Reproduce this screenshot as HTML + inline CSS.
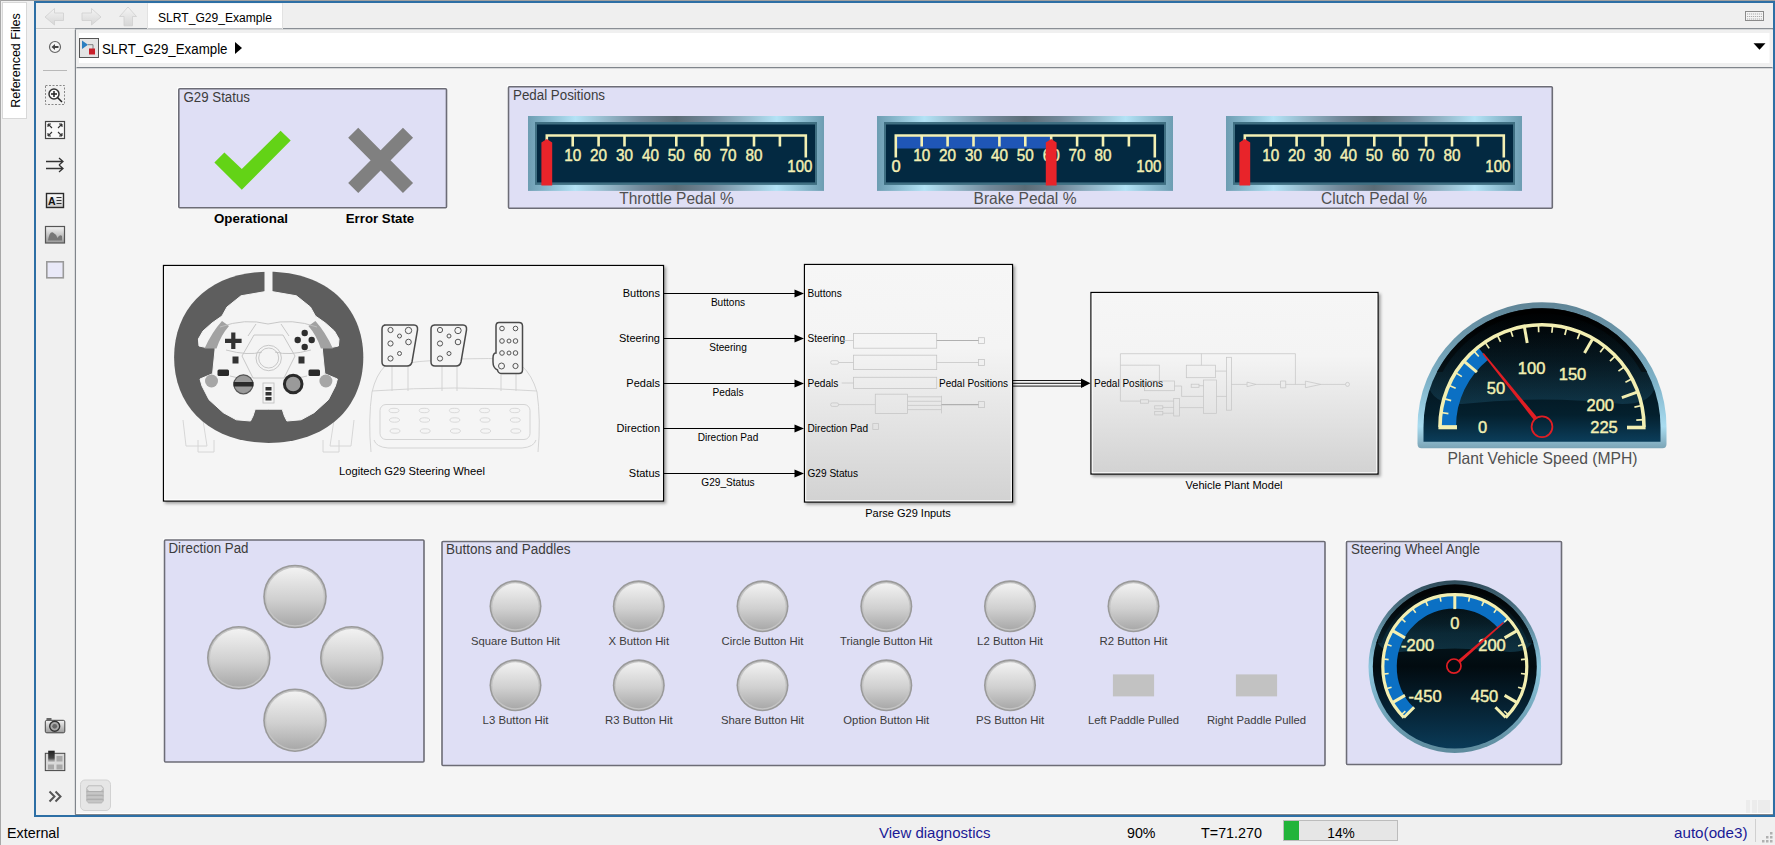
<!DOCTYPE html>
<html><head><meta charset="utf-8"><style>
html,body{margin:0;padding:0;width:1775px;height:845px;overflow:hidden;background:#f0f0f0;font-family:"Liberation Sans", sans-serif;}
svg{display:block;}
</style></head><body>
<svg width="1775" height="845" viewBox="0 0 1775 845" font-family='"Liberation Sans", sans-serif'>

<defs>
  <linearGradient id="frameH" x1="0" y1="0" x2="1" y2="0">
    <stop offset="0" stop-color="#6d9db2"/>
    <stop offset="0.16" stop-color="#b3e3f6"/>
    <stop offset="0.38" stop-color="#72899a"/>
    <stop offset="0.5" stop-color="#5b6c76"/>
    <stop offset="0.62" stop-color="#72899a"/>
    <stop offset="0.84" stop-color="#b3e3f6"/>
    <stop offset="1" stop-color="#6d9db2"/>
  </linearGradient>
  <linearGradient id="subsys" x1="0" y1="0" x2="0" y2="1">
    <stop offset="0" stop-color="#f6f6f6"/>
    <stop offset="0.35" stop-color="#f4f4f4"/>
    <stop offset="1" stop-color="#d2d2d2"/>
  </linearGradient>
  <linearGradient id="btn" x1="0" y1="0" x2="0" y2="1">
    <stop offset="0" stop-color="#f2f2f2"/>
    <stop offset="0.55" stop-color="#d0d0d0"/>
    <stop offset="1" stop-color="#a9a9a9"/>
  </linearGradient>
  <radialGradient id="dialbg" cx="0.5" cy="0.5" r="0.5">
    <stop offset="0" stop-color="#06202e"/>
    <stop offset="1" stop-color="#020c12"/>
  </radialGradient>
  <linearGradient id="dialrim" x1="0" y1="0" x2="0" y2="1">
    <stop offset="0" stop-color="#4d6f80"/>
    <stop offset="0.5" stop-color="#8fc3da"/>
    <stop offset="1" stop-color="#6a95a8"/>
  </linearGradient>
  <linearGradient id="speedbg" x1="0" y1="0" x2="0" y2="1">
    <stop offset="0" stop-color="#000000"/>
    <stop offset="0.5" stop-color="#03131b"/>
    <stop offset="0.8" stop-color="#04202e"/>
    <stop offset="1" stop-color="#0b3d5a"/>
  </linearGradient>
  <filter id="shadow" x="-5%" y="-5%" width="115%" height="115%">
    <feDropShadow dx="2" dy="2" stdDeviation="1.5" flood-color="#000" flood-opacity="0.35"/>
  </filter>
  <linearGradient id="rimS" x1="0" y1="0" x2="0" y2="1">
    <stop offset="0" stop-color="#5f8496"/>
    <stop offset="0.55" stop-color="#7fb3c9"/>
    <stop offset="0.85" stop-color="#a9dcf0"/>
    <stop offset="1" stop-color="#7ba4b6"/>
  </linearGradient>
  <linearGradient id="rimC" x1="0" y1="0" x2="0" y2="1">
    <stop offset="0" stop-color="#2e4a58"/>
    <stop offset="0.5" stop-color="#8cc6de"/>
    <stop offset="1" stop-color="#5d8a9c"/>
  </linearGradient>
  <linearGradient id="steerbg" x1="0" y1="0" x2="0" y2="1">
    <stop offset="0" stop-color="#000000"/>
    <stop offset="0.3" stop-color="#04161e"/>
    <stop offset="0.5" stop-color="#020b10"/>
    <stop offset="1" stop-color="#0a3a57"/>
  </linearGradient>
  <linearGradient id="gloss" x1="0" y1="0" x2="0" y2="1">
    <stop offset="0" stop-color="#5ab4dc" stop-opacity="0"/>
    <stop offset="0.6" stop-color="#5ab4dc" stop-opacity="0.04"/>
    <stop offset="1" stop-color="#5ab4dc" stop-opacity="0.16"/>
  </linearGradient>
  <linearGradient id="glossS" gradientUnits="userSpaceOnUse" x1="0" y1="320" x2="0" y2="404">
    <stop offset="0" stop-color="#4ab0e0" stop-opacity="0"/>
    <stop offset="0.5" stop-color="#4ab0e0" stop-opacity="0.06"/>
    <stop offset="1" stop-color="#4ab0e0" stop-opacity="0.16"/>
  </linearGradient>
  <linearGradient id="glossC" gradientUnits="userSpaceOnUse" x1="0" y1="595" x2="0" y2="652">
    <stop offset="0" stop-color="#3aa8d8" stop-opacity="0.02"/>
    <stop offset="0.5" stop-color="#3aa8d8" stop-opacity="0.08"/>
    <stop offset="1" stop-color="#3aa8d8" stop-opacity="0.22"/>
  </linearGradient>
  <linearGradient id="iconG" x1="0" y1="0" x2="0" y2="1">
    <stop offset="0" stop-color="#ffffff"/><stop offset="1" stop-color="#c8c8c8"/>
  </linearGradient>
  <linearGradient id="iconG2" x1="0" y1="0" x2="0" y2="1">
    <stop offset="0" stop-color="#f4f4f4"/><stop offset="1" stop-color="#9a9a9a"/>
  </linearGradient>
  <linearGradient id="pixG" x1="0" y1="0" x2="0" y2="1">
    <stop offset="0" stop-color="#222"/><stop offset="0.6" stop-color="#444"/><stop offset="1" stop-color="#eee"/>
  </linearGradient>
  <linearGradient id="arrG" x1="0" y1="0" x2="0" y2="1">
    <stop offset="0" stop-color="#f4f4f4"/><stop offset="1" stop-color="#d6d6d6"/>
  </linearGradient>
</defs>
<rect x="0" y="0" width="1775" height="845" fill="#f0f0f0"/><rect x="0" y="0" width="1775" height="1" fill="#a0a0a0"/><rect x="0" y="0" width="1" height="845" fill="#a8a8a8"/><rect x="2.5" y="2.5" width="24" height="116" fill="#ffffff" stroke="#d8d8d8" stroke-width="1"/><text transform="translate(20.3,107.8) rotate(-90)" font-family='"Liberation Sans", sans-serif' font-size="13.5" fill="#000" textLength="94.5" lengthAdjust="spacingAndGlyphs">Referenced Files</text><rect x="34" y="1" width="1741" height="816" fill="#2d6fa5"/><rect x="36" y="3" width="1737" height="812" fill="#f0f0f0"/><rect x="36" y="3" width="1737" height="26" fill="#efefef"/><rect x="36" y="28" width="39" height="1" fill="#c8c8c8"/><rect x="36" y="29" width="39" height="1" fill="#f8f8f8"/><rect x="75" y="28" width="1698" height="1.5" fill="#8a8f95"/><rect x="147.5" y="3.5" width="135" height="25" fill="#ffffff"/><rect x="147" y="3" width="1" height="26" fill="#e2e2e2"/><rect x="282" y="3" width="1" height="26" fill="#e2e2e2"/><text x="158" y="22" font-family='"Liberation Sans", sans-serif' font-size="12.5" fill="#000" textLength="114" lengthAdjust="spacingAndGlyphs">SLRT_G29_Example</text><path d="M45,17 L54.5,8.5 L54.5,13 L63.5,13 L63.5,20.5 L54.5,20.5 L54.5,25 Z" fill="url(#arrG)" stroke="#cfcfcf" stroke-width="0.8"/><path d="M101,17 L91.5,8.5 L91.5,13 L82,13 L82,20.5 L91.5,20.5 L91.5,25 Z" fill="url(#arrG)" stroke="#cfcfcf" stroke-width="0.8"/><path d="M128,7 L136.5,16.5 L132.5,16.5 L132.5,25.8 L124,25.8 L124,16.5 L119.5,16.5 Z" fill="url(#arrG)" stroke="#cfcfcf" stroke-width="0.8"/><rect x="1745.5" y="11.5" width="18" height="9" fill="#f4f4f4" stroke="#8a8a8a" stroke-width="1"/><path d="M1747,14h15M1747,16.5h15M1747,19h15" stroke="#9a9a9a" stroke-width="0.8" stroke-dasharray="1.2,0.8"/><rect x="36" y="29.5" width="39.5" height="785" fill="#f0f0f0"/><rect x="74.8" y="29.5" width="1.2" height="785" fill="#80858b"/><rect x="76.5" y="29.5" width="1696" height="37" fill="#f0f0f0"/><rect x="79" y="33" width="1690.5" height="30" fill="#ffffff"/><rect x="76.5" y="67" width="1696" height="1.5" fill="#80858b"/><rect x="79.5" y="38.5" width="19" height="19" fill="#e4e4e4" stroke="#555" stroke-width="1"/><path d="M82,40.5 L82,49 L88,44.7 Z" fill="#2b7fc0"/><path d="M88,44.7 L93,44.7 L93,50" stroke="#666" fill="none" stroke-width="0.8"/><rect x="89" y="48.5" width="6" height="6" fill="#c8202a"/><text x="102" y="53.5" font-family='"Liberation Sans", sans-serif' font-size="14" fill="#000" textLength="125.5" lengthAdjust="spacingAndGlyphs">SLRT_G29_Example</text><path d="M235,42 L242,48 L235,54 Z" fill="#000"/><path d="M1753.5,43.2 L1765.5,43.2 L1759.5,49.8 Z" fill="#000"/><rect x="76.5" y="68.5" width="1695.5" height="745" fill="#f5f5f5"/><rect x="76.5" y="813" width="1695.5" height="1" fill="#ffffff"/><rect x="75" y="814" width="1698" height="1" fill="#80858b"/><rect x="1746" y="800" width="4" height="13" fill="#ececec"/><rect x="1752" y="800" width="5" height="13" fill="#ececec"/><rect x="1758" y="800" width="12" height="13" fill="#ececec"/><text x="7" y="838" font-family='"Liberation Sans", sans-serif' font-size="15" fill="#000" textLength="52.5" lengthAdjust="spacingAndGlyphs">External</text><text x="879" y="838" font-family='"Liberation Sans", sans-serif' font-size="15" fill="#1a1a96" textLength="111.5" lengthAdjust="spacingAndGlyphs">View diagnostics</text><text x="1127" y="838" font-family='"Liberation Sans", sans-serif' font-size="15" fill="#000" textLength="28.5" lengthAdjust="spacingAndGlyphs">90%</text><text x="1201" y="838" font-family='"Liberation Sans", sans-serif' font-size="15" fill="#000" textLength="61" lengthAdjust="spacingAndGlyphs">T=71.270</text><rect x="1283.5" y="820.5" width="114" height="20" fill="#e6e6e6" stroke="#bcbcbc" stroke-width="1"/><rect x="1284" y="821" width="15" height="19" fill="#22b43a"/><text x="1341" y="838" text-anchor="middle" font-family='"Liberation Sans", sans-serif' font-size="15" fill="#000" textLength="27.5" lengthAdjust="spacingAndGlyphs">14%</text><text x="1674" y="838" font-family='"Liberation Sans", sans-serif' font-size="15" fill="#1a1a96" textLength="73.5" lengthAdjust="spacingAndGlyphs">auto(ode3)</text><rect x="1755" y="819" width="1" height="23" fill="#d0d0d0"/><rect x="1770" y="832" width="2.5" height="2.5" fill="#b0b0b0"/><rect x="1766" y="836" width="2.5" height="2.5" fill="#b0b0b0"/><rect x="1770" y="836" width="2.5" height="2.5" fill="#b0b0b0"/><rect x="1762" y="840" width="2.5" height="2.5" fill="#b0b0b0"/><rect x="1766" y="840" width="2.5" height="2.5" fill="#b0b0b0"/><rect x="1770" y="840" width="2.5" height="2.5" fill="#b0b0b0"/><circle cx="55" cy="47" r="5.5" fill="#f4f4f4" stroke="#666" stroke-width="1.2"/><path d="M51.5,47 L55,44 L55,46 L58.5,46 L58.5,48 L55,48 L55,50 Z" fill="#444"/><rect x="43" y="70" width="24" height="1" fill="#b8b8b8"/><rect x="45.5" y="85.5" width="19" height="19" fill="none" stroke="#888" stroke-width="1" stroke-dasharray="2,1.5"/><circle cx="54" cy="94" r="5" fill="#fafafa" stroke="#333" stroke-width="1.5"/><path d="M54,91v6M51,94h6M57.5,97.5L62,102" stroke="#222" stroke-width="1.5"/><rect x="45.5" y="121.5" width="19" height="17" fill="#f8f8f8" stroke="#444" stroke-width="1.2"/><path d="M48,124l4,4M48,124h3M48,124v3M62,124l-4,4M62,124h-3M62,124v3M48,136l4,-4M48,136h3M48,136v-3M62,136l-4,-4M62,136h-3M62,136v-3" stroke="#333" stroke-width="1.1"/><path d="M46,161.5h17M59,158l4,3.5l-4,3.5M46,168.5h17M59,165l4,3.5l-4,3.5" stroke="#333" stroke-width="1.3" fill="none"/><rect x="46.5" y="193.5" width="17" height="14" fill="url(#iconG)" stroke="#2a2a2a" stroke-width="1.4"/><text x="48" y="205" font-family='"Liberation Sans", sans-serif' font-size="10.5" font-weight="bold" fill="#111">A</text><path d="M56.5,197.5h5M56.5,200.5h5M56.5,203.5h5" stroke="#333" stroke-width="1.1"/><rect x="45.5" y="226.5" width="19" height="16.5" fill="url(#iconG2)" stroke="#555" stroke-width="1.2"/><path d="M48,240.5 Q49.5,231 53,232.5 Q56,234 57.5,238 Q59.5,234 62,236 L62,240.5 Z" fill="#777"/><rect x="46.8" y="261.8" width="16.5" height="16" fill="#e9e9f8" stroke="#9a9a9a" stroke-width="1.6"/><rect x="45.3" y="720.3" width="19.5" height="12.5" rx="1.5" fill="url(#iconG2)" stroke="#444" stroke-width="1"/><rect x="46.5" y="718" width="5" height="2.5" fill="#666"/><circle cx="54.7" cy="726.3" r="5" fill="#aaa" stroke="#333" stroke-width="1.4"/><circle cx="54.7" cy="726.3" r="2.4" fill="#666"/><rect x="45.3" y="753.3" width="19.5" height="17.3" fill="#d8d8d8" stroke="#444" stroke-width="1"/><rect x="48.2" y="750.7" width="6.5" height="12.3" fill="url(#pixG)"/><rect x="56.5" y="756" width="6" height="5.5" fill="#a8a8a8"/><rect x="48" y="764.5" width="6" height="5" fill="#a8a8a8"/><rect x="56.5" y="764.5" width="6" height="5" fill="#a8a8a8"/><path d="M49.5,791.5l5,5l-5,5M55.5,791.5l5,5l-5,5" stroke="#555" stroke-width="2" fill="none"/><rect x="80.5" y="780" width="30" height="30.5" rx="4.5" fill="#e6e6e6" stroke="#d2d2d2" stroke-width="1"/><path d="M88.5,785.3 H101.5 L103.8,788 V801 L101.5,803.6 H88.5 L86.2,801 V788 Z" fill="#bcbcbc"/><path d="M89,786.3 H101 L103,788.5 L101,791 H89 L87,788.5 Z" fill="#e2e2e2"/><path d="M86.5,791.8 H103.5 M86.5,795.8 H103.5 M86.5,799.8 H103.5" stroke="#a9a9a9" stroke-width="0.9"/><path d="M87.5,793 H102.5 M87.5,797 H102.5 M87.5,801 H102.5" stroke="#cfcfcf" stroke-width="1.2"/><rect x="177.8" y="87.7" width="268.7" height="120.10000000000001" fill="none" stroke="#ffffff" stroke-width="1"/><rect x="178.8" y="88.7" width="267.7" height="119.10000000000001" rx="1" fill="#dfdff5" stroke="#6c6c76" stroke-width="1.6"/><text x="183.5" y="102.2" font-size="14" fill="#3c3c3c" textLength="66.5" lengthAdjust="spacingAndGlyphs">G29 Status</text><path d="M214.4,162.4 L224.4,152.5 L241.8,169 L280.6,130.8 L290.7,140.6 L241.8,189.8 Z" fill="#63d316"/><path d="M353.2,132.8 L408,188 M408,132.8 L353.2,188" stroke="#808080" stroke-width="14.2"/><text x="251" y="223" font-size="13" fill="#000" text-anchor="middle" font-weight="bold" textLength="74" lengthAdjust="spacingAndGlyphs">Operational</text><text x="380" y="223" font-size="13" fill="#000" text-anchor="middle" font-weight="bold" textLength="68.5" lengthAdjust="spacingAndGlyphs">Error State</text><rect x="507.5" y="85.8" width="1044.8" height="122.50000000000001" fill="none" stroke="#ffffff" stroke-width="1"/><rect x="508.5" y="86.8" width="1043.8" height="121.50000000000001" rx="1" fill="#dfdff5" stroke="#6c6c76" stroke-width="1.6"/><text x="513" y="99.8" font-size="14" fill="#3c3c3c" textLength="92" lengthAdjust="spacingAndGlyphs">Pedal Positions</text><g transform="translate(528,116)"><rect x="0" y="0" width="296" height="74.9" fill="url(#frameH)"/><rect x="7" y="6" width="282" height="62.900000000000006" fill="#3f6f82"/><rect x="9" y="8.5" width="278" height="57.900000000000006" fill="#032941"/><path d="M18.8,41.5 V19.5 H277.8 V41.5" stroke="#f3f0b4" stroke-width="2.6" fill="none"/><path d="M44.70,19.5 V30.5" stroke="#f3f0b4" stroke-width="2.6"/><path d="M70.60,19.5 V30.5" stroke="#f3f0b4" stroke-width="2.6"/><path d="M96.50,19.5 V30.5" stroke="#f3f0b4" stroke-width="2.6"/><path d="M122.40,19.5 V30.5" stroke="#f3f0b4" stroke-width="2.6"/><path d="M148.30,19.5 V30.5" stroke="#f3f0b4" stroke-width="2.6"/><path d="M174.20,19.5 V30.5" stroke="#f3f0b4" stroke-width="2.6"/><path d="M200.10,19.5 V30.5" stroke="#f3f0b4" stroke-width="2.6"/><path d="M226.00,19.5 V30.5" stroke="#f3f0b4" stroke-width="2.6"/><path d="M251.90,19.5 V30.5" stroke="#f3f0b4" stroke-width="2.6"/><text x="44.70" y="45.0" font-size="16.5" fill="#f3f0b4" stroke="#f3f0b4" stroke-width="0.45" text-anchor="middle" textLength="17" lengthAdjust="spacingAndGlyphs">10</text><text x="70.60" y="45.0" font-size="16.5" fill="#f3f0b4" stroke="#f3f0b4" stroke-width="0.45" text-anchor="middle" textLength="17" lengthAdjust="spacingAndGlyphs">20</text><text x="96.50" y="45.0" font-size="16.5" fill="#f3f0b4" stroke="#f3f0b4" stroke-width="0.45" text-anchor="middle" textLength="17" lengthAdjust="spacingAndGlyphs">30</text><text x="122.40" y="45.0" font-size="16.5" fill="#f3f0b4" stroke="#f3f0b4" stroke-width="0.45" text-anchor="middle" textLength="17" lengthAdjust="spacingAndGlyphs">40</text><text x="148.30" y="45.0" font-size="16.5" fill="#f3f0b4" stroke="#f3f0b4" stroke-width="0.45" text-anchor="middle" textLength="17" lengthAdjust="spacingAndGlyphs">50</text><text x="174.20" y="45.0" font-size="16.5" fill="#f3f0b4" stroke="#f3f0b4" stroke-width="0.45" text-anchor="middle" textLength="17" lengthAdjust="spacingAndGlyphs">60</text><text x="200.10" y="45.0" font-size="16.5" fill="#f3f0b4" stroke="#f3f0b4" stroke-width="0.45" text-anchor="middle" textLength="17" lengthAdjust="spacingAndGlyphs">70</text><text x="226.00" y="45.0" font-size="16.5" fill="#f3f0b4" stroke="#f3f0b4" stroke-width="0.45" text-anchor="middle" textLength="17" lengthAdjust="spacingAndGlyphs">80</text><text x="19.1" y="55.5" font-size="16.5" fill="#f3f0b4" stroke="#f3f0b4" stroke-width="0.45" text-anchor="middle">0</text><text x="271.8" y="55.5" font-size="16.5" fill="#f3f0b4" stroke="#f3f0b4" stroke-width="0.45" text-anchor="middle" textLength="25" lengthAdjust="spacingAndGlyphs">100</text><path d="M13.4,69.5 V26.5 L18.8,23 L24.200000000000003,26.5 V69.5 Z" fill="#e8242a"/></g><g transform="translate(877,116)"><rect x="0" y="0" width="296" height="74.9" fill="url(#frameH)"/><rect x="7" y="6" width="282" height="62.900000000000006" fill="#3f6f82"/><rect x="9" y="8.5" width="278" height="57.900000000000006" fill="#032941"/><rect x="19.8" y="20.0" width="154.4" height="12.5" fill="#1f56b6"/><path d="M18.8,41.5 V19.5 H277.8 V41.5" stroke="#f3f0b4" stroke-width="2.6" fill="none"/><path d="M44.70,19.5 V30.5" stroke="#f3f0b4" stroke-width="2.6"/><path d="M70.60,19.5 V30.5" stroke="#f3f0b4" stroke-width="2.6"/><path d="M96.50,19.5 V30.5" stroke="#f3f0b4" stroke-width="2.6"/><path d="M122.40,19.5 V30.5" stroke="#f3f0b4" stroke-width="2.6"/><path d="M148.30,19.5 V30.5" stroke="#f3f0b4" stroke-width="2.6"/><path d="M174.20,19.5 V30.5" stroke="#f3f0b4" stroke-width="2.6"/><path d="M200.10,19.5 V30.5" stroke="#f3f0b4" stroke-width="2.6"/><path d="M226.00,19.5 V30.5" stroke="#f3f0b4" stroke-width="2.6"/><path d="M251.90,19.5 V30.5" stroke="#f3f0b4" stroke-width="2.6"/><text x="44.70" y="45.0" font-size="16.5" fill="#f3f0b4" stroke="#f3f0b4" stroke-width="0.45" text-anchor="middle" textLength="17" lengthAdjust="spacingAndGlyphs">10</text><text x="70.60" y="45.0" font-size="16.5" fill="#f3f0b4" stroke="#f3f0b4" stroke-width="0.45" text-anchor="middle" textLength="17" lengthAdjust="spacingAndGlyphs">20</text><text x="96.50" y="45.0" font-size="16.5" fill="#f3f0b4" stroke="#f3f0b4" stroke-width="0.45" text-anchor="middle" textLength="17" lengthAdjust="spacingAndGlyphs">30</text><text x="122.40" y="45.0" font-size="16.5" fill="#f3f0b4" stroke="#f3f0b4" stroke-width="0.45" text-anchor="middle" textLength="17" lengthAdjust="spacingAndGlyphs">40</text><text x="148.30" y="45.0" font-size="16.5" fill="#f3f0b4" stroke="#f3f0b4" stroke-width="0.45" text-anchor="middle" textLength="17" lengthAdjust="spacingAndGlyphs">50</text><text x="174.20" y="45.0" font-size="16.5" fill="#f3f0b4" stroke="#f3f0b4" stroke-width="0.45" text-anchor="middle" textLength="17" lengthAdjust="spacingAndGlyphs">60</text><text x="200.10" y="45.0" font-size="16.5" fill="#f3f0b4" stroke="#f3f0b4" stroke-width="0.45" text-anchor="middle" textLength="17" lengthAdjust="spacingAndGlyphs">70</text><text x="226.00" y="45.0" font-size="16.5" fill="#f3f0b4" stroke="#f3f0b4" stroke-width="0.45" text-anchor="middle" textLength="17" lengthAdjust="spacingAndGlyphs">80</text><text x="19.1" y="55.5" font-size="16.5" fill="#f3f0b4" stroke="#f3f0b4" stroke-width="0.45" text-anchor="middle">0</text><text x="271.8" y="55.5" font-size="16.5" fill="#f3f0b4" stroke="#f3f0b4" stroke-width="0.45" text-anchor="middle" textLength="25" lengthAdjust="spacingAndGlyphs">100</text><path d="M168.8,69.5 V26.5 L174.20000000000002,23 L179.60000000000002,26.5 V69.5 Z" fill="#e8242a"/></g><g transform="translate(1226,116)"><rect x="0" y="0" width="296" height="74.9" fill="url(#frameH)"/><rect x="7" y="6" width="282" height="62.900000000000006" fill="#3f6f82"/><rect x="9" y="8.5" width="278" height="57.900000000000006" fill="#032941"/><path d="M18.8,41.5 V19.5 H277.8 V41.5" stroke="#f3f0b4" stroke-width="2.6" fill="none"/><path d="M44.70,19.5 V30.5" stroke="#f3f0b4" stroke-width="2.6"/><path d="M70.60,19.5 V30.5" stroke="#f3f0b4" stroke-width="2.6"/><path d="M96.50,19.5 V30.5" stroke="#f3f0b4" stroke-width="2.6"/><path d="M122.40,19.5 V30.5" stroke="#f3f0b4" stroke-width="2.6"/><path d="M148.30,19.5 V30.5" stroke="#f3f0b4" stroke-width="2.6"/><path d="M174.20,19.5 V30.5" stroke="#f3f0b4" stroke-width="2.6"/><path d="M200.10,19.5 V30.5" stroke="#f3f0b4" stroke-width="2.6"/><path d="M226.00,19.5 V30.5" stroke="#f3f0b4" stroke-width="2.6"/><path d="M251.90,19.5 V30.5" stroke="#f3f0b4" stroke-width="2.6"/><text x="44.70" y="45.0" font-size="16.5" fill="#f3f0b4" stroke="#f3f0b4" stroke-width="0.45" text-anchor="middle" textLength="17" lengthAdjust="spacingAndGlyphs">10</text><text x="70.60" y="45.0" font-size="16.5" fill="#f3f0b4" stroke="#f3f0b4" stroke-width="0.45" text-anchor="middle" textLength="17" lengthAdjust="spacingAndGlyphs">20</text><text x="96.50" y="45.0" font-size="16.5" fill="#f3f0b4" stroke="#f3f0b4" stroke-width="0.45" text-anchor="middle" textLength="17" lengthAdjust="spacingAndGlyphs">30</text><text x="122.40" y="45.0" font-size="16.5" fill="#f3f0b4" stroke="#f3f0b4" stroke-width="0.45" text-anchor="middle" textLength="17" lengthAdjust="spacingAndGlyphs">40</text><text x="148.30" y="45.0" font-size="16.5" fill="#f3f0b4" stroke="#f3f0b4" stroke-width="0.45" text-anchor="middle" textLength="17" lengthAdjust="spacingAndGlyphs">50</text><text x="174.20" y="45.0" font-size="16.5" fill="#f3f0b4" stroke="#f3f0b4" stroke-width="0.45" text-anchor="middle" textLength="17" lengthAdjust="spacingAndGlyphs">60</text><text x="200.10" y="45.0" font-size="16.5" fill="#f3f0b4" stroke="#f3f0b4" stroke-width="0.45" text-anchor="middle" textLength="17" lengthAdjust="spacingAndGlyphs">70</text><text x="226.00" y="45.0" font-size="16.5" fill="#f3f0b4" stroke="#f3f0b4" stroke-width="0.45" text-anchor="middle" textLength="17" lengthAdjust="spacingAndGlyphs">80</text><text x="19.1" y="55.5" font-size="16.5" fill="#f3f0b4" stroke="#f3f0b4" stroke-width="0.45" text-anchor="middle">0</text><text x="271.8" y="55.5" font-size="16.5" fill="#f3f0b4" stroke="#f3f0b4" stroke-width="0.45" text-anchor="middle" textLength="25" lengthAdjust="spacingAndGlyphs">100</text><path d="M13.4,69.5 V26.5 L18.8,23 L24.200000000000003,26.5 V69.5 Z" fill="#e8242a"/></g><text x="676.5" y="203.8" font-size="16.5" fill="#505050" text-anchor="middle" textLength="114.5" lengthAdjust="spacingAndGlyphs">Throttle Pedal %</text><text x="1025" y="203.8" font-size="16.5" fill="#505050" text-anchor="middle" textLength="103" lengthAdjust="spacingAndGlyphs">Brake Pedal %</text><text x="1374" y="203.8" font-size="16.5" fill="#505050" text-anchor="middle" textLength="106" lengthAdjust="spacingAndGlyphs">Clutch Pedal %</text><rect x="163.5" y="265.5" width="500.0" height="235.5" fill="#f5f5f5" stroke="#000" stroke-width="1.3" filter="url(#shadow)"/><rect x="164.7" y="266.7" width="497.6" height="233.1" fill="none" stroke="#ffffff" stroke-width="1"/><g stroke="#d4d4d4" stroke-width="0.9" fill="none"><path d="M183,420 L186,446 H207 L203,420"/><path d="M198,440 V452 H214 V440"/><path d="M354,420 L351,446 H330 L334,420"/><path d="M339,440 V452 H323 V440"/></g><path d="M174.1,357.3 C174.1,305.94 211.94,271.70000000000005 268.7,271.70000000000005 C325.46,271.70000000000005 363.29999999999995,305.94 363.29999999999995,357.3 C363.29999999999995,408.66 325.46,442.9 268.7,442.9 C211.94,442.9 174.1,408.66 174.1,357.3 Z" fill="#5e5e5e"/><path d="M268.7,291.0 L241.0,295.8 L227.0,307.0 L222.0,316.0 L212.0,323.0 L203.0,331.0 L198.4,339.0 L199.0,346.0 L205.0,347.3 L215.0,347.3 L215.0,350.0 L212.6,373.7 L200.0,379.0 L202.0,386.0 L209.0,399.7 L223.3,412.7 L236.3,419.8 L250.5,421.0 L253.0,416.0 L255.2,409.2 L268.7,409.2 L268.7,409.2 L282.2,409.2 L284.4,416.0 L286.9,421.0 L301.1,419.8 L314.1,412.7 L328.4,399.7 L335.4,386.0 L337.4,379.0 L324.8,373.7 L322.4,350.0 L322.4,347.3 L332.4,347.3 L338.4,346.0 L339.0,339.0 L334.4,331.0 L325.4,323.0 L315.4,316.0 L310.4,307.0 L296.4,295.8 L268.7,291.0 Z" fill="#f4f4f4" stroke="#f4f4f4" stroke-width="1" stroke-linejoin="round"/><rect x="264.5" y="271" width="8" height="21" fill="#f4f4f4"/><path d="M222,321 L229,326 Q221,335 216.5,348.5 L204.5,348.5 Q212,332 222,321 Z" fill="#a2a2a2"/><path d="M315.4,321 L308.4,326 Q316.4,335 320.9,348.5 L332.9,348.5 Q325.4,332 315.4,321 Z" fill="#a2a2a2"/><circle cx="211.5" cy="381" r="6.5" fill="#a6a6a6"/><circle cx="325.9" cy="381" r="6.5" fill="#a6a6a6"/><g stroke="#c2c2c2" stroke-width="0.9" fill="none"><path d="M220,327 Q245,318 268,324 Q292,318 317,327"/><path d="M226,350 Q248,356 262,352M311,350 Q289,356 275,352"/><path d="M254,335 L283,335 L295,356 L284,378 L253,378 L242,356 Z"/><path d="M256,324 L248,336M281,324 L289,336"/><circle cx="268.7" cy="358" r="12.7"/><circle cx="268.7" cy="358" r="10"/><path d="M230,376 Q245,380 252,378M307,376 Q292,380 285,378"/><rect x="263" y="383" width="11" height="20"/></g><path d="M233.3,332.5v16.5M225,340.8h16.6" stroke="#333" stroke-width="4.2"/><circle cx="304.7" cy="333" r="3.2" fill="#2e2e2e"/><circle cx="304.7" cy="347" r="3.2" fill="#2e2e2e"/><circle cx="297.7" cy="340" r="3.2" fill="#2e2e2e"/><circle cx="311.7" cy="340" r="3.2" fill="#2e2e2e"/><rect x="232.5" y="356.5" width="6" height="7" fill="#333"/><rect x="298.5" y="356.5" width="6" height="7" fill="#333"/><rect x="217.5" y="369.5" width="11.5" height="6.5" rx="1.5" fill="#2a2a2a"/><rect x="308.5" y="369.5" width="11.5" height="6.5" rx="1.5" fill="#2a2a2a"/><circle cx="243.4" cy="384.3" r="9.5" fill="#9a9a9a" stroke="#555" stroke-width="1.2"/><rect x="233.5" y="382" width="20" height="4.5" fill="#2a2a2a"/><circle cx="293.2" cy="384" r="8.8" fill="#9a9a9a" stroke="#2a2a2a" stroke-width="3"/><rect x="265.5" y="387" width="6" height="3.5" fill="#333"/><rect x="265.5" y="392" width="6" height="3.5" fill="#333"/><rect x="265.5" y="397" width="6" height="3.5" fill="#333"/><g stroke="#d0d0d0" stroke-width="0.9" fill="none"><path d="M371,452 Q368,420 372,392 Q376,375 385,366"/><path d="M538,452 Q541,420 537,392 Q532,375 522,366"/><path d="M372,391 Q455,385 537,391"/><rect x="380" y="404.5" width="150" height="35" rx="6"/><path d="M374,440 Q376,447 388,448 H522 Q534,447 536,440"/><path d="M385,366 Q455,355 522,360"/><path d="M392,366V391M408,366V391M442,366V391M457,366V391M501,373V391M516,373V391"/></g><g stroke="#d2d2d2" stroke-width="0.8" fill="none"><ellipse cx="394.0" cy="410.5" rx="5" ry="2.2"/><ellipse cx="394.5" cy="420" rx="5" ry="2.2"/><ellipse cx="395.0" cy="431" rx="5" ry="2.2"/><ellipse cx="424.2" cy="410.5" rx="5" ry="2.2"/><ellipse cx="424.7" cy="420" rx="5" ry="2.2"/><ellipse cx="425.2" cy="431" rx="5" ry="2.2"/><ellipse cx="454.4" cy="410.5" rx="5" ry="2.2"/><ellipse cx="454.9" cy="420" rx="5" ry="2.2"/><ellipse cx="455.4" cy="431" rx="5" ry="2.2"/><ellipse cx="484.6" cy="410.5" rx="5" ry="2.2"/><ellipse cx="485.1" cy="420" rx="5" ry="2.2"/><ellipse cx="485.6" cy="431" rx="5" ry="2.2"/><ellipse cx="514.8" cy="410.5" rx="5" ry="2.2"/><ellipse cx="515.3" cy="420" rx="5" ry="2.2"/><ellipse cx="515.8" cy="431" rx="5" ry="2.2"/></g><g stroke="#4a4a4a" stroke-width="1.5" fill="#f4f4f4"><path d="M384,325 H414 Q418,325 417.5,330 L412,362 Q411,366 407,366 H386 Q382,366 382,362 V329 Q382,325 386,325 Z"/><path d="M434,325 H463 Q467,325 466.5,330 L461,362 Q460,366 456,366 H435 Q431,366 431,362 V329 Q431,325 435,325 Z"/><path d="M499,322.5 H519 Q522.5,322.5 522.5,326 V370 Q522.5,373.5 519,373.5 H502 Q498,373.5 497.5,370 Q493,368 493,362 V358 Q493,353 496,353 V326 Q496,322.5 499,322.5 Z"/></g><g stroke="#555" stroke-width="1" fill="none"><circle cx="390.5" cy="330" r="2.6"/><circle cx="408.5" cy="330.5" r="3.2"/><circle cx="399.5" cy="336" r="2"/><circle cx="390.5" cy="343.5" r="2.6"/><circle cx="408.5" cy="342" r="2.8"/><circle cx="399.5" cy="353.5" r="2"/><circle cx="390.5" cy="358.5" r="2.6"/><circle cx="440" cy="330" r="2.6"/><circle cx="458" cy="330.5" r="3.2"/><circle cx="449" cy="336" r="2"/><circle cx="440" cy="343.5" r="2.6"/><circle cx="458" cy="342" r="2.8"/><circle cx="449" cy="353.5" r="2"/><circle cx="440" cy="358.5" r="2.6"/><circle cx="502" cy="328.5" r="2.3"/><circle cx="515.5" cy="328.5" r="2.3"/><circle cx="502" cy="341" r="2.3"/><circle cx="515.5" cy="341" r="2.3"/><circle cx="502" cy="353" r="2.3"/><circle cx="515.5" cy="353" r="2.3"/><circle cx="501.5" cy="366" r="3"/><circle cx="515.5" cy="366" r="2.6"/><circle cx="509" cy="353" r="2"/><circle cx="509" cy="341" r="2"/></g><text x="660" y="297.2" font-size="11" fill="#000" text-anchor="end">Buttons</text><path d="M664,293.5 H796" stroke="#000" stroke-width="1.1"/><path d="M794.5,289.5 L804,293.5 L794.5,297.5 Z" fill="#000"/><text x="728" y="306.0" font-size="10.1" fill="#000" text-anchor="middle">Buttons</text><text x="660" y="342.2" font-size="11" fill="#000" text-anchor="end">Steering</text><path d="M664,338.5 H796" stroke="#000" stroke-width="1.1"/><path d="M794.5,334.5 L804,338.5 L794.5,342.5 Z" fill="#000"/><text x="728" y="351.0" font-size="10.1" fill="#000" text-anchor="middle">Steering</text><text x="660" y="387.2" font-size="11" fill="#000" text-anchor="end">Pedals</text><path d="M664,383.5 H796" stroke="#000" stroke-width="1.1"/><path d="M794.5,379.5 L804,383.5 L794.5,387.5 Z" fill="#000"/><text x="728" y="396.0" font-size="10.1" fill="#000" text-anchor="middle">Pedals</text><text x="660" y="432.2" font-size="11" fill="#000" text-anchor="end">Direction</text><path d="M664,428.5 H796" stroke="#000" stroke-width="1.1"/><path d="M794.5,424.5 L804,428.5 L794.5,432.5 Z" fill="#000"/><text x="728" y="441.0" font-size="10.1" fill="#000" text-anchor="middle">Direction Pad</text><text x="660" y="477.2" font-size="11" fill="#000" text-anchor="end">Status</text><path d="M664,473.5 H796" stroke="#000" stroke-width="1.1"/><path d="M794.5,469.5 L804,473.5 L794.5,477.5 Z" fill="#000"/><text x="728" y="486.0" font-size="10.1" fill="#000" text-anchor="middle">G29_Status</text><text x="412" y="474.8" font-size="11" fill="#000" text-anchor="middle" textLength="146" lengthAdjust="spacingAndGlyphs">Logitech G29 Steering Wheel</text><rect x="804.5" y="264.5" width="208.0" height="237.5" fill="url(#subsys)" stroke="#000" stroke-width="1.3" filter="url(#shadow)"/><rect x="805.7" y="265.7" width="205.6" height="235.1" fill="none" stroke="#ffffff" stroke-width="1"/><text x="807.5" y="297.1" font-size="10.1" fill="#000">Buttons</text><text x="807.5" y="342.1" font-size="10.1" fill="#000">Steering</text><text x="807.5" y="387.1" font-size="10.1" fill="#000">Pedals</text><text x="807.5" y="432.1" font-size="10.1" fill="#000">Direction Pad</text><text x="807.5" y="477.1" font-size="10.1" fill="#000">G29 Status</text><text x="1008" y="387.1" font-size="10.1" fill="#000" text-anchor="end" textLength="69" lengthAdjust="spacingAndGlyphs">Pedal Positions</text><text x="908" y="516.8" font-size="11" fill="#000" text-anchor="middle">Parse G29 Inputs</text><g stroke="#c6c6c6" stroke-width="0.8" fill="none"><rect x="853.6" y="333.5" width="83.1" height="14.7"/><rect x="853.6" y="355.2" width="83.1" height="14.4"/><rect x="853.6" y="377.3" width="83.1" height="11.2"/><rect x="875.3" y="394.2" width="32.3" height="19.2"/><path d="M841.7,340.5H853.6M838.6,362.5H853.6M841.7,383H853.6M838.6,404.6H875.3M907.6,396.8H941.5M907.6,401.3H941.5M907.6,405.4H941.5M907.6,409.6H941.5M941.5,395.8V413.4M936.7,362.5H978.5"/><rect x="978.5" y="337.7" width="6.1" height="5.7"/><rect x="978.5" y="359.4" width="6.1" height="6.1"/><rect x="978.5" y="401.6" width="6.1" height="6"/><rect x="830.6" y="360.7" width="8" height="3.5" rx="1.7"/><rect x="830.6" y="402.9" width="8" height="3.5" rx="1.7"/><rect x="872.8" y="423.6" width="5.7" height="5.8"/></g><path d="M936.7,340.5H978.5M941.5,404.6H978.5" stroke="#b0b0b0" stroke-width="1.1"/><path d="M1013,380.5H1084M1013,383.3H1084M1013,386.1H1084" stroke="#000" stroke-width="0.9"/><path d="M1081,378.5 L1090.5,383.3 L1081,388 Z" fill="#000"/><rect x="1091" y="292.5" width="287" height="181.5" fill="url(#subsys)" stroke="#000" stroke-width="1.3" filter="url(#shadow)"/><rect x="1092.2" y="293.7" width="284.6" height="179.1" fill="none" stroke="#ffffff" stroke-width="1"/><text x="1094" y="387.1" font-size="10.1" fill="#000" textLength="69" lengthAdjust="spacingAndGlyphs">Pedal Positions</text><text x="1234" y="488.5" font-size="11" fill="#000" text-anchor="middle" textLength="97" lengthAdjust="spacingAndGlyphs">Vehicle Plant Model</text><g stroke="#c6c6c6" stroke-width="0.75" fill="none"><path d="M1120.4,353.7V401.1M1120.4,353.7H1295.4V384.4M1120.4,365.2H1159.4V381M1201.4,353.7V365.2"/><rect x="1186.3" y="365.2" width="29.1" height="12.5"/><rect x="1226.4" y="357.3" width="5.2" height="52.9"/><rect x="1203.4" y="380" width="13.1" height="33.3"/><rect x="1144.6" y="381" width="29.9" height="9.7"/><rect x="1191.2" y="384.2" width="7.8" height="3.1"/><rect x="1140.4" y="399.8" width="8.1" height="3.4"/><rect x="1173.7" y="398.5" width="5.8" height="17.5"/><rect x="1154.7" y="405.8" width="8.1" height="3.1"/><rect x="1154.7" y="411.5" width="8.1" height="3.4"/><path d="M1120.4,401.1H1140.4M1148.5,401.1H1173.7M1162.8,407.4H1173.7M1162.8,413.2H1173.7M1179.5,407.6H1203.4M1174.5,386H1181.6V396.4H1203.4M1199,385.7H1203.4M1215.4,371.1H1226.4M1216.5,396.4H1226.4"/><path d="M1231.6,384.4H1246.7M1247,382.1L1256,384.4L1247,386.7ZM1256,384.4H1280.5M1280.5,381h5.2v6.8h-5.2zM1285.7,384.4H1305.4M1305.4,381.1L1320.8,384.4L1305.4,387.7ZM1320.8,384.4H1345.5"/><circle cx="1347.5" cy="384.4" r="2"/></g><rect x="163.5" y="539" width="260.5" height="223" fill="none" stroke="#ffffff" stroke-width="1"/><rect x="164.5" y="540" width="259.5" height="222" rx="1" fill="#dfdff5" stroke="#6c6c76" stroke-width="1.6"/><text x="168.5" y="553" font-size="14" fill="#3c3c3c" textLength="80" lengthAdjust="spacingAndGlyphs">Direction Pad</text><circle cx="295" cy="596.5" r="31.8" fill="#9a9a9a"/><circle cx="295" cy="596.5" r="30.2" fill="#c4c4c4"/><circle cx="295" cy="596.5" r="28.8" fill="url(#btn)"/><circle cx="238.8" cy="657.8" r="31.8" fill="#9a9a9a"/><circle cx="238.8" cy="657.8" r="30.2" fill="#c4c4c4"/><circle cx="238.8" cy="657.8" r="28.8" fill="url(#btn)"/><circle cx="351.8" cy="657.8" r="31.8" fill="#9a9a9a"/><circle cx="351.8" cy="657.8" r="30.2" fill="#c4c4c4"/><circle cx="351.8" cy="657.8" r="28.8" fill="url(#btn)"/><circle cx="295" cy="720.2" r="31.8" fill="#9a9a9a"/><circle cx="295" cy="720.2" r="30.2" fill="#c4c4c4"/><circle cx="295" cy="720.2" r="28.8" fill="url(#btn)"/><rect x="441" y="540.5" width="884" height="225.0" fill="none" stroke="#ffffff" stroke-width="1"/><rect x="442" y="541.5" width="883" height="224.0" rx="1" fill="#dfdff5" stroke="#6c6c76" stroke-width="1.6"/><text x="446" y="554" font-size="14" fill="#3c3c3c" textLength="124.5" lengthAdjust="spacingAndGlyphs">Buttons and Paddles</text><circle cx="515.5" cy="606.3" r="26" fill="#9a9a9a"/><circle cx="515.5" cy="606.3" r="24.4" fill="#c4c4c4"/><circle cx="515.5" cy="606.3" r="23" fill="url(#btn)"/><text x="515.5" y="644.8" font-size="11" fill="#3c3c3c" text-anchor="middle" textLength="89" lengthAdjust="spacingAndGlyphs">Square Button Hit</text><circle cx="638.8" cy="606.3" r="26" fill="#9a9a9a"/><circle cx="638.8" cy="606.3" r="24.4" fill="#c4c4c4"/><circle cx="638.8" cy="606.3" r="23" fill="url(#btn)"/><text x="638.8" y="644.8" font-size="11" fill="#3c3c3c" text-anchor="middle" textLength="60.5" lengthAdjust="spacingAndGlyphs">X Button Hit</text><circle cx="762.5" cy="606.3" r="26" fill="#9a9a9a"/><circle cx="762.5" cy="606.3" r="24.4" fill="#c4c4c4"/><circle cx="762.5" cy="606.3" r="23" fill="url(#btn)"/><text x="762.5" y="644.8" font-size="11" fill="#3c3c3c" text-anchor="middle" textLength="81.8" lengthAdjust="spacingAndGlyphs">Circle Button Hit</text><circle cx="886.3" cy="606.3" r="26" fill="#9a9a9a"/><circle cx="886.3" cy="606.3" r="24.4" fill="#c4c4c4"/><circle cx="886.3" cy="606.3" r="23" fill="url(#btn)"/><text x="886.3" y="644.8" font-size="11" fill="#3c3c3c" text-anchor="middle" textLength="92.4" lengthAdjust="spacingAndGlyphs">Triangle Button Hit</text><circle cx="1010" cy="606.3" r="26" fill="#9a9a9a"/><circle cx="1010" cy="606.3" r="24.4" fill="#c4c4c4"/><circle cx="1010" cy="606.3" r="23" fill="url(#btn)"/><text x="1010" y="644.8" font-size="11" fill="#3c3c3c" text-anchor="middle" textLength="65.8" lengthAdjust="spacingAndGlyphs">L2 Button Hit</text><circle cx="1133.5" cy="606.3" r="26" fill="#9a9a9a"/><circle cx="1133.5" cy="606.3" r="24.4" fill="#c4c4c4"/><circle cx="1133.5" cy="606.3" r="23" fill="url(#btn)"/><text x="1133.5" y="644.8" font-size="11" fill="#3c3c3c" text-anchor="middle" textLength="67.9" lengthAdjust="spacingAndGlyphs">R2 Button Hit</text><circle cx="515.5" cy="685.3" r="26" fill="#9a9a9a"/><circle cx="515.5" cy="685.3" r="24.4" fill="#c4c4c4"/><circle cx="515.5" cy="685.3" r="23" fill="url(#btn)"/><text x="515.5" y="724" font-size="11" fill="#3c3c3c" text-anchor="middle" textLength="65.8" lengthAdjust="spacingAndGlyphs">L3 Button Hit</text><circle cx="638.8" cy="685.3" r="26" fill="#9a9a9a"/><circle cx="638.8" cy="685.3" r="24.4" fill="#c4c4c4"/><circle cx="638.8" cy="685.3" r="23" fill="url(#btn)"/><text x="638.8" y="724" font-size="11" fill="#3c3c3c" text-anchor="middle" textLength="67.6" lengthAdjust="spacingAndGlyphs">R3 Button Hit</text><circle cx="762.5" cy="685.3" r="26" fill="#9a9a9a"/><circle cx="762.5" cy="685.3" r="24.4" fill="#c4c4c4"/><circle cx="762.5" cy="685.3" r="23" fill="url(#btn)"/><text x="762.5" y="724" font-size="11" fill="#3c3c3c" text-anchor="middle" textLength="83" lengthAdjust="spacingAndGlyphs">Share Button Hit</text><circle cx="886.3" cy="685.3" r="26" fill="#9a9a9a"/><circle cx="886.3" cy="685.3" r="24.4" fill="#c4c4c4"/><circle cx="886.3" cy="685.3" r="23" fill="url(#btn)"/><text x="886.3" y="724" font-size="11" fill="#3c3c3c" text-anchor="middle" textLength="85.9" lengthAdjust="spacingAndGlyphs">Option Button Hit</text><circle cx="1010" cy="685.3" r="26" fill="#9a9a9a"/><circle cx="1010" cy="685.3" r="24.4" fill="#c4c4c4"/><circle cx="1010" cy="685.3" r="23" fill="url(#btn)"/><text x="1010" y="724" font-size="11" fill="#3c3c3c" text-anchor="middle" textLength="68.2" lengthAdjust="spacingAndGlyphs">PS Button Hit</text><rect x="1112.9" y="674.4" width="41.2" height="22" fill="#c2c2c2"/><text x="1133.5" y="724" font-size="11" fill="#3c3c3c" text-anchor="middle" textLength="91.2" lengthAdjust="spacingAndGlyphs">Left Paddle Pulled</text><rect x="1235.9" y="674.4" width="41.2" height="22" fill="#c2c2c2"/><text x="1256.5" y="724" font-size="11" fill="#3c3c3c" text-anchor="middle" textLength="99.2" lengthAdjust="spacingAndGlyphs">Right Paddle Pulled</text><rect x="1345.5" y="540.5" width="216.0" height="224.0" fill="none" stroke="#ffffff" stroke-width="1"/><rect x="1346.5" y="541.5" width="215.0" height="223.0" rx="1" fill="#dfdff5" stroke="#6c6c76" stroke-width="1.6"/><text x="1351" y="554" font-size="14" fill="#3c3c3c" textLength="129" lengthAdjust="spacingAndGlyphs">Steering Wheel Angle</text><path d="M1417.5,426.7 A124.5,124.5 0 0 1 1666.5,426.7 V443.7 Q1666.5,448.2 1662.5,448.2 H1421.5 Q1417.5,448.2 1417.5,443.7 Z" fill="url(#rimS)"/><path d="M1423.5,426.7 A118.5,118.5 0 0 1 1660.5,426.7 V441.7 H1423.5 Z" fill="url(#speedbg)"/><clipPath id="spclip"><path d="M1423.5,426.7 A118.5,118.5 0 0 1 1660.5,426.7 V441.7 H1423.5 Z"/></clipPath><clipPath id="spclip2"><rect x="1412" y="290" width="260" height="82"/></clipPath><g clip-path="url(#spclip2)"><circle cx="1542" cy="426.7" r="116.0" fill="none" stroke="#000" stroke-width="5" stroke-opacity="0.75"/></g><path d="M1430,300 V390 Q1436,404 1462,404 Q1542,395 1622,404 Q1648,404 1654,390 V300 Z" fill="url(#glossS)" clip-path="url(#spclip)"/><path d="M1448.50,426.70 A93.5,93.5 0 0 1 1483.41,353.83" stroke="#0b70c4" stroke-width="15" fill="none"/><path d="M1440.00,426.70 A102,102 0 0 1 1644.00,426.70" stroke="#f3efb2" stroke-width="3.6" fill="none"/><path d="M1438.4,427.5 H1457" stroke="#f3efb2" stroke-width="3.6"/><path d="M1645.6,427.5 H1627" stroke="#f3efb2" stroke-width="3.6"/><path d="M1440.00,426.70 L1457.00,426.70" stroke="#f3efb2" stroke-width="3"/><path d="M1440.99,412.50 L1448.42,413.55" stroke="#f3efb2" stroke-width="1.7"/><path d="M1443.95,398.58 L1451.16,400.65" stroke="#f3efb2" stroke-width="1.7"/><path d="M1448.82,385.21 L1455.67,388.26" stroke="#f3efb2" stroke-width="1.7"/><path d="M1455.50,372.65 L1461.86,376.62" stroke="#f3efb2" stroke-width="1.7"/><path d="M1463.86,361.14 L1476.89,372.06" stroke="#f3efb2" stroke-width="3"/><path d="M1473.75,350.90 L1478.77,356.47" stroke="#f3efb2" stroke-width="1.7"/><path d="M1484.96,342.14 L1489.16,348.36" stroke="#f3efb2" stroke-width="1.7"/><path d="M1497.29,335.02 L1500.57,341.76" stroke="#f3efb2" stroke-width="1.7"/><path d="M1510.48,329.69 L1512.80,336.83" stroke="#f3efb2" stroke-width="1.7"/><path d="M1524.29,326.25 L1527.24,342.99" stroke="#f3efb2" stroke-width="3"/><path d="M1538.44,324.76 L1538.70,332.26" stroke="#f3efb2" stroke-width="1.7"/><path d="M1552.66,325.26 L1551.88,332.72" stroke="#f3efb2" stroke-width="1.7"/><path d="M1566.68,327.73 L1564.86,335.01" stroke="#f3efb2" stroke-width="1.7"/><path d="M1580.21,332.13 L1577.40,339.08" stroke="#f3efb2" stroke-width="1.7"/><path d="M1593.00,338.37 L1584.50,353.09" stroke="#f3efb2" stroke-width="3"/><path d="M1604.80,346.32 L1600.18,352.23" stroke="#f3efb2" stroke-width="1.7"/><path d="M1615.37,355.84 L1609.98,361.05" stroke="#f3efb2" stroke-width="1.7"/><path d="M1624.52,366.75 L1618.45,371.15" stroke="#f3efb2" stroke-width="1.7"/><path d="M1632.06,378.81 L1625.44,382.33" stroke="#f3efb2" stroke-width="1.7"/><path d="M1637.85,391.81 L1621.87,397.63" stroke="#f3efb2" stroke-width="3"/><path d="M1641.77,405.49 L1634.43,407.05" stroke="#f3efb2" stroke-width="1.7"/><path d="M1643.75,419.58 L1636.27,420.11" stroke="#f3efb2" stroke-width="1.7"/><text x="1482.50" y="432.70" font-size="16.5" fill="#f3efb2" stroke="#f3efb2" stroke-width="0.45" text-anchor="middle">0</text><text x="1496.04" y="394.13" font-size="16.5" fill="#f3efb2" stroke="#f3efb2" stroke-width="0.45" text-anchor="middle">50</text><text x="1531.58" y="373.61" font-size="16.5" fill="#f3efb2" stroke="#f3efb2" stroke-width="0.45" text-anchor="middle">100</text><text x="1572.50" y="379.87" font-size="16.5" fill="#f3efb2" stroke="#f3efb2" stroke-width="0.45" text-anchor="middle">150</text><text x="1600.26" y="411.49" font-size="16.5" fill="#f3efb2" stroke="#f3efb2" stroke-width="0.45" text-anchor="middle">200</text><text x="1604.00" y="432.70" font-size="16.5" fill="#f3efb2" stroke="#f3efb2" stroke-width="0.45" text-anchor="middle">225</text><path d="M1537.37,417.59 L1483.72,352.94 L1482.48,353.94 L1534.10,420.22 Z" fill="#e01e24"/><circle cx="1542" cy="426.7" r="10.4" fill="none" stroke="#e01e24" stroke-width="1.8"/><text x="1542.5" y="463.5" font-size="16.5" fill="#505050" text-anchor="middle" textLength="190" lengthAdjust="spacingAndGlyphs">Plant Vehicle Speed (MPH)</text><circle cx="1454.8" cy="666.6" r="86.3" fill="url(#rimC)"/><circle cx="1454.8" cy="666.6" r="82" fill="url(#steerbg)"/><clipPath id="stclip"><circle cx="1454.8" cy="666.6" r="82"/></clipPath><clipPath id="stclip2"><rect x="1364.8" y="575" width="180" height="68"/></clipPath><g clip-path="url(#stclip2)"><circle cx="1454.8" cy="666.6" r="79.5" fill="none" stroke="#000" stroke-width="5" stroke-opacity="0.75"/></g><path d="M1377.8,580 V643 Q1382.8,652 1399.8,652 Q1454.8,645 1509.8,652 Q1526.8,652 1531.8,643 V580 Z" fill="url(#glossC)" clip-path="url(#stclip)"/><path d="M1409.19,712.21 A64.5,64.5 0 1 1 1503.18,623.95" stroke="#0b70c4" stroke-width="13" fill="none"/><path d="M1403.89,717.51 A72,72 0 1 1 1505.71,717.51" stroke="#f3efb2" stroke-width="3.2" fill="none"/><path d="M1403.89,717.51 L1414.14,707.26" stroke="#f3efb2" stroke-width="3"/><path d="M1401.29,714.78 L1405.38,711.10" stroke="#f3efb2" stroke-width="1.6"/><path d="M1392.45,702.60 L1405.00,695.35" stroke="#f3efb2" stroke-width="3"/><path d="M1386.32,688.85 L1391.55,687.15" stroke="#f3efb2" stroke-width="1.6"/><path d="M1383.19,674.13 L1388.66,673.55" stroke="#f3efb2" stroke-width="1.6"/><path d="M1383.19,659.07 L1388.66,659.65" stroke="#f3efb2" stroke-width="1.6"/><path d="M1386.32,644.35 L1391.55,646.05" stroke="#f3efb2" stroke-width="1.6"/><path d="M1392.45,630.60 L1405.00,637.85" stroke="#f3efb2" stroke-width="3"/><path d="M1401.29,618.42 L1405.38,622.10" stroke="#f3efb2" stroke-width="1.6"/><path d="M1412.48,608.35 L1415.71,612.80" stroke="#f3efb2" stroke-width="1.6"/><path d="M1425.51,600.82 L1427.75,605.85" stroke="#f3efb2" stroke-width="1.6"/><path d="M1439.83,596.17 L1440.97,601.55" stroke="#f3efb2" stroke-width="1.6"/><path d="M1454.80,594.60 L1454.80,609.10" stroke="#f3efb2" stroke-width="3"/><path d="M1469.77,596.17 L1468.63,601.55" stroke="#f3efb2" stroke-width="1.6"/><path d="M1484.09,600.82 L1481.85,605.85" stroke="#f3efb2" stroke-width="1.6"/><path d="M1497.12,608.35 L1493.89,612.80" stroke="#f3efb2" stroke-width="1.6"/><path d="M1508.31,618.42 L1504.22,622.10" stroke="#f3efb2" stroke-width="1.6"/><path d="M1517.15,630.60 L1504.60,637.85" stroke="#f3efb2" stroke-width="3"/><path d="M1523.28,644.35 L1518.05,646.05" stroke="#f3efb2" stroke-width="1.6"/><path d="M1526.41,659.07 L1520.94,659.65" stroke="#f3efb2" stroke-width="1.6"/><path d="M1526.41,674.13 L1520.94,673.55" stroke="#f3efb2" stroke-width="1.6"/><path d="M1523.28,688.85 L1518.05,687.15" stroke="#f3efb2" stroke-width="1.6"/><path d="M1517.15,702.60 L1504.60,695.35" stroke="#f3efb2" stroke-width="3"/><path d="M1508.31,714.78 L1504.22,711.10" stroke="#f3efb2" stroke-width="1.6"/><path d="M1505.71,717.51 L1495.46,707.26" stroke="#f3efb2" stroke-width="3"/><text x="1454.80" y="629.10" font-size="16.5" fill="#f3efb2" stroke="#f3efb2" stroke-width="0.45" text-anchor="middle">0</text><text x="1417.56" y="651.10" font-size="16.5" fill="#f3efb2" stroke="#f3efb2" stroke-width="0.45" text-anchor="middle">-200</text><text x="1492.04" y="651.10" font-size="16.5" fill="#f3efb2" stroke="#f3efb2" stroke-width="0.45" text-anchor="middle">200</text><text x="1425.10" y="702.30" font-size="16.5" fill="#f3efb2" stroke="#f3efb2" stroke-width="0.45" text-anchor="middle">-450</text><text x="1484.50" y="702.30" font-size="16.5" fill="#f3efb2" stroke="#f3efb2" stroke-width="0.45" text-anchor="middle">450</text><path d="M1460.31,662.67 L1503.94,622.94 L1503.08,621.97 L1458.19,660.27 Z" fill="#e01e24"/><circle cx="1453.8999999999999" cy="666.1" r="7.1" fill="none" stroke="#e01e24" stroke-width="1.7"/>
</svg>
</body></html>
